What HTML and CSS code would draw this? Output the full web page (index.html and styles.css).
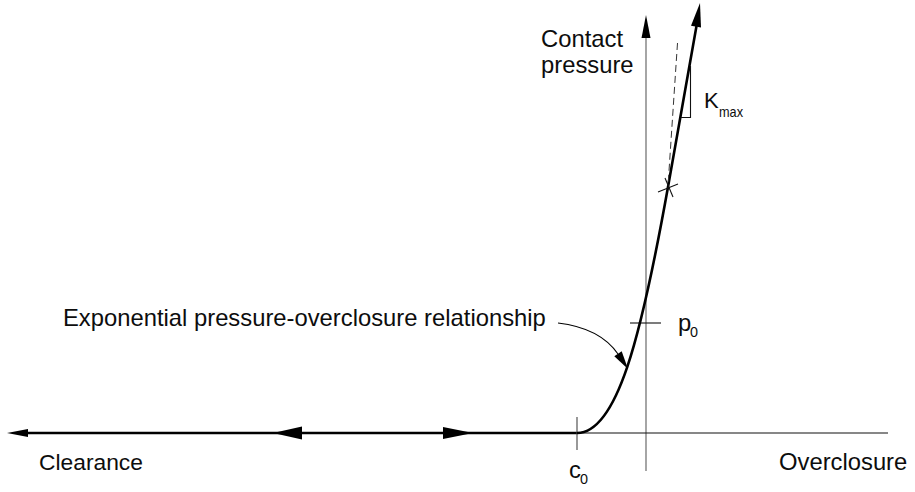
FILE: index.html
```html
<!DOCTYPE html>
<html lang="en">
<head>
<meta charset="utf-8">
<title>Exponential pressure-overclosure relationship</title>
<link rel="stylesheet" href="styles.css">
</head>
<body>
<main class="figure">
<svg class="diagram" width="915" height="492" viewBox="0 0 915 492" xmlns="http://www.w3.org/2000/svg">
  <!-- axes -->
  <line class="axis-v" x1="646" y1="36" x2="646" y2="471"/>
  <polygon class="fill" points="646,15 641.5,38 650.5,38"/>
  <line class="axis-h" x1="577" y1="433" x2="888" y2="433"/>

  <!-- clearance line with arrows -->
  <line class="thick" x1="26" y1="433" x2="577" y2="433"/>
  <polygon class="fill" points="7,433 28,429 28,437"/>
  <polygon class="fill" points="273,433 302,426.5 302,439.5"/>
  <polygon class="fill" points="473,433 443,427 443,439"/>

  <!-- ticks -->
  <line class="tick-gray" x1="577" y1="417" x2="577" y2="450"/>
  <line class="tick" x1="630" y1="323" x2="661" y2="323"/>

  <!-- curve -->
  <path class="thick curve" d="M577,433 C617,433 641,338 668,187 L696.5,26"/>
  <polygon class="fill" points="700,3 701,27.5 691,25.7"/>

  <!-- tangent (dashed) -->
  <line class="dashed" x1="677.5" y1="43" x2="668" y2="186"/>

  <!-- slope triangle -->
  <polyline class="tick" points="690.5,66 690.5,117.5 681,117.5"/>

  <!-- cross mark -->
  <line class="tick" x1="658" y1="192" x2="678" y2="184"/>
  <line class="tick" x1="665" y1="178" x2="673" y2="197"/>

  <!-- leader -->
  <path class="leader" d="M558,323 Q600,328 618,354"/>
  <polygon class="fill" points="628,369 621.7,351.2 614.3,356.3"/>

  <!-- labels -->
  <text class="label" x="541" y="47">Contact</text>
  <text class="label" x="541" y="73">pressure</text>
  <text class="label-k" x="704" y="108">K</text>
  <text class="sub" x="719" y="117" textLength="24" lengthAdjust="spacingAndGlyphs">max</text>
  <text class="label" x="63" y="326">Exponential pressure-overclosure relationship</text>
  <text class="label" x="678" y="331">p</text>
  <text class="sub" x="690" y="337" textLength="8" lengthAdjust="spacingAndGlyphs">0</text>
  <text class="label" x="569" y="478">c</text>
  <text class="sub" x="580" y="484" textLength="8" lengthAdjust="spacingAndGlyphs">0</text>
  <text class="label label-small" x="39" y="470">Clearance</text>
  <text class="label" x="779" y="470">Overclosure</text>
</svg>
</main>
</body>
</html>
```
FILE: styles.css
```css
html, body {
  margin: 0;
  padding: 0;
  background: #ffffff;
}

.figure {
  display: block;
  width: 915px;
  height: 492px;
  overflow: hidden;
}

.diagram {
  display: block;
  font-family: "Liberation Sans", Arial, Helvetica, sans-serif;
}

.axis-v {
  stroke: #6a6a6a;
  stroke-width: 1.2;
}

.axis-h {
  stroke: #111111;
  stroke-width: 1.2;
}

.thick {
  stroke: #000000;
  stroke-width: 2.6;
  fill: none;
}

.curve {
  stroke-linejoin: round;
}

.fill {
  fill: #000000;
  stroke: none;
}

.tick {
  stroke: #111111;
  stroke-width: 1.1;
  fill: none;
}

.tick-gray {
  stroke: #444444;
  stroke-width: 1.1;
}

.dashed {
  stroke: #333333;
  stroke-width: 1;
  stroke-dasharray: 7 4;
}

.leader {
  stroke: #000000;
  stroke-width: 1.1;
  fill: none;
}

.label {
  font-size: 23.8px;
  fill: #0d0d0d;
}

.label-small {
  font-size: 22.8px;
}

.label-k {
  font-size: 22px;
  fill: #0d0d0d;
}

.sub {
  font-size: 15px;
  fill: #0d0d0d;
}
```
